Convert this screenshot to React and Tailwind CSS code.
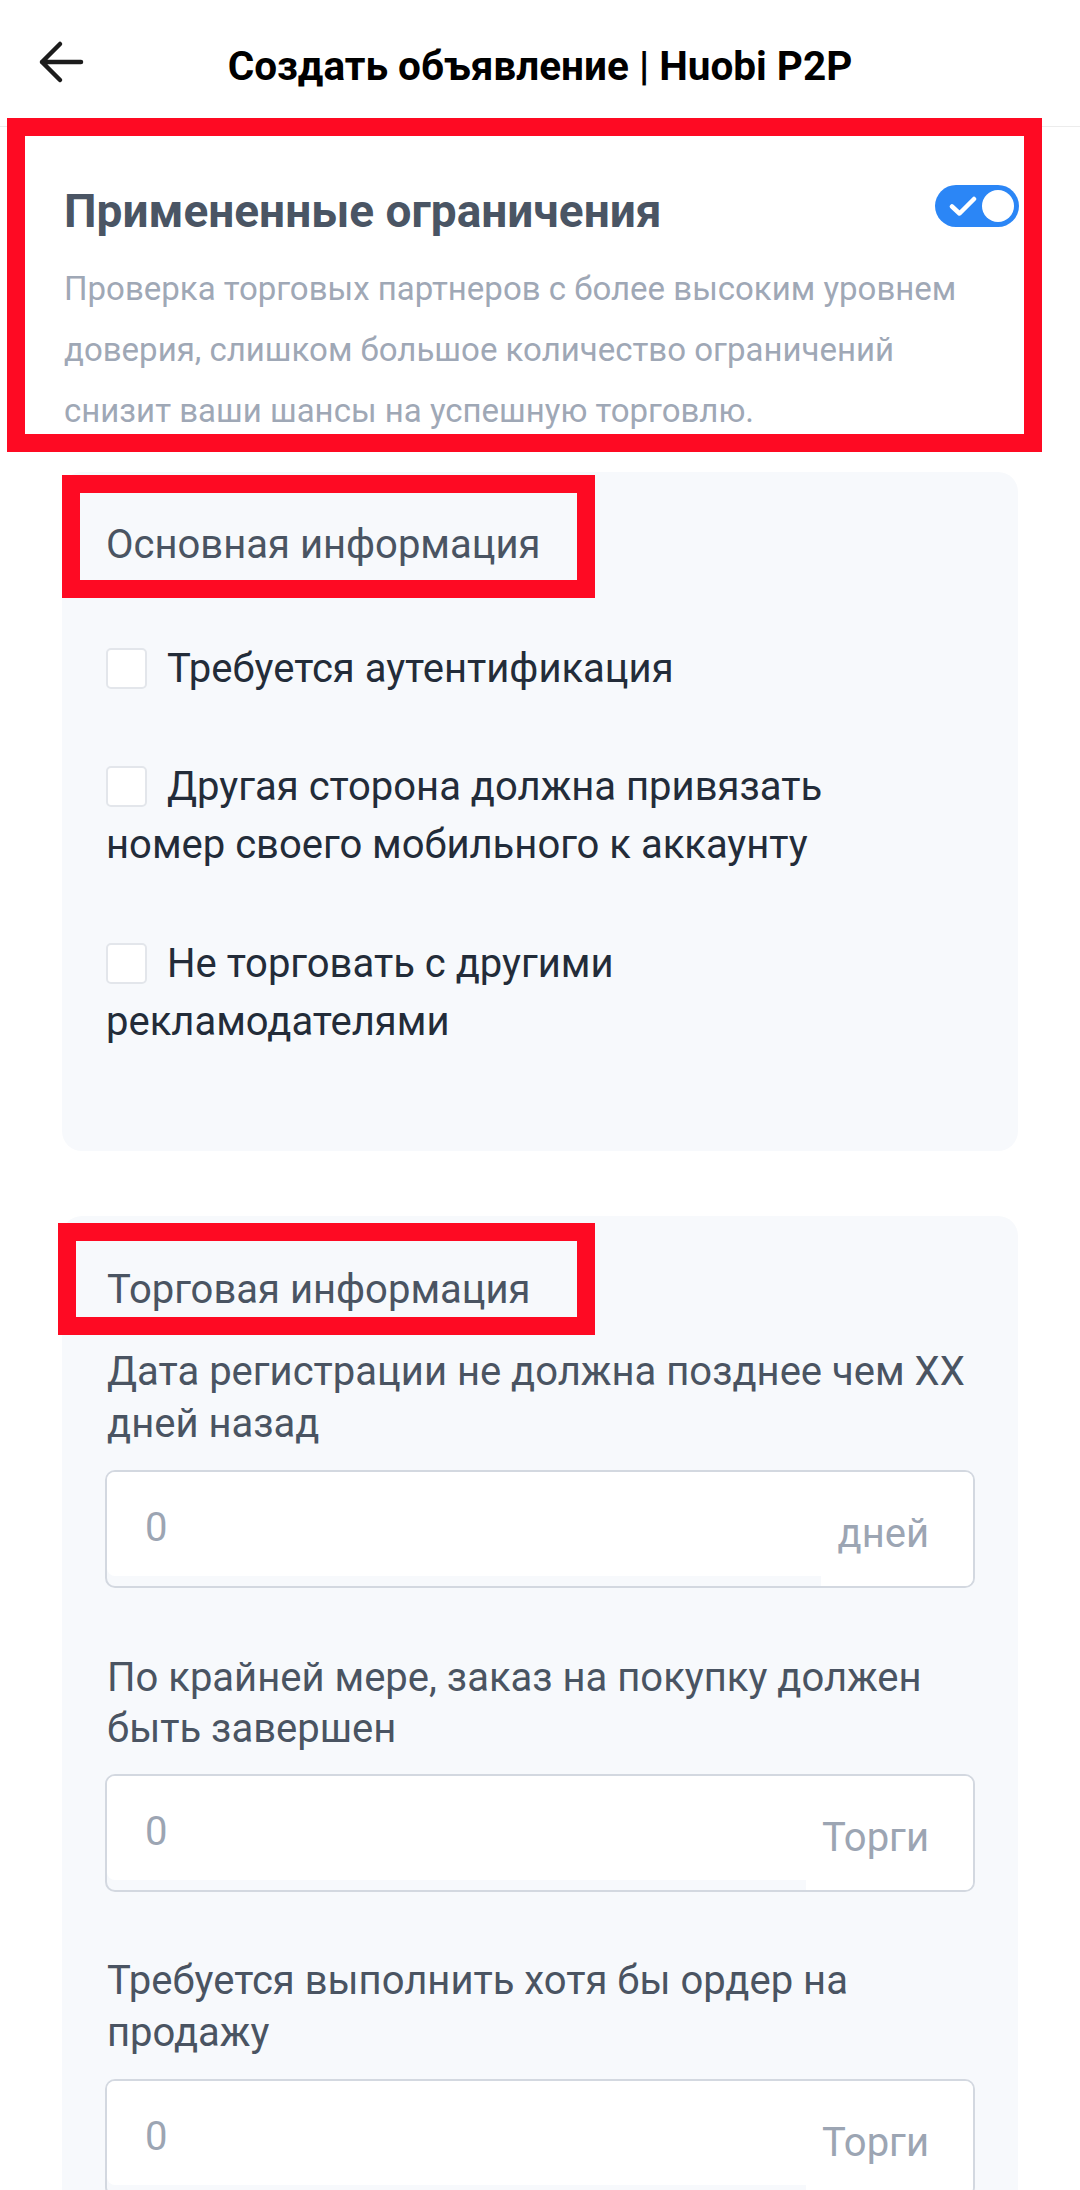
import React from "react";

function Checkbox() {
  return (
    <span className="inline-block w-[41px] h-[41px] align-middle mr-[20px] -mt-[6px] rounded-[5px] border-2 border-[#e3e6eb] bg-white" />
  );
}

function NumberField({ unit }) {
  return (
    <div className="mt-[20px] h-[118px] flex border-2 border-[#d3d8e0] rounded-[10px] bg-[#f7f9fc] overflow-hidden">
      <div className="flex-1 mb-[10px] bg-white rounded-bl-[8px] flex items-center pl-[38px] text-[40px] text-[#9ca5b3] leading-none pt-[8px]">
        0
      </div>
      <div className="bg-white flex items-center pl-[16px] pr-[44px] pt-[9px] text-[40px] text-[#9ca5b3] leading-none">
        {unit}
      </div>
    </div>
  );
}

export default function App() {
  return (
    <div className="relative w-[1080px] h-[2190px] overflow-hidden bg-white font-['Roboto',sans-serif]">
      {/* Header */}
      <div className="h-[127px] border-b border-[#ececec] grid grid-cols-[1fr_auto_1fr] items-center">
        <div className="pl-[38px] pb-[2px]">
          <svg width="46" height="44" viewBox="0 0 46 44" fill="none">
            <path d="M43 22H4M22 4L4 22L22 40" stroke="#1c1c1c" strokeWidth="4.5" strokeLinecap="round" strokeLinejoin="round" />
          </svg>
        </div>
        <div className="text-[40.5px] font-bold text-black pt-[6px]">
          Создать объявление | Huobi P2P
        </div>
        <div />
      </div>

      {/* Restrictions */}
      <div className="pl-[64px] pr-[61px] pt-[55px]">
        <div className="flex items-center justify-between">
          <div className="text-[46px] leading-[58px] font-bold text-[#4a5564]">Примененные ограничения</div>
          <div className="w-[84px] h-[42px] rounded-full bg-[#2b86f6] flex items-center justify-between pl-[14px] pr-[5px] -mt-[10px]">
            <svg width="28" height="22" viewBox="0 0 28 22" fill="none">
              <path d="M3 11.5L10.5 18.5L25 4" stroke="white" strokeWidth="4.5" strokeLinecap="round" strokeLinejoin="round" />
            </svg>
            <span className="w-[32px] h-[32px] rounded-full bg-white" />
          </div>
        </div>
        <p className="mt-[18px] text-[33px] leading-[61px] text-[#9fa8b6]">
          Проверка торговых партнеров с более высоким уровнем
          <br />
          доверия, слишком большое количество ограничений
          <br />
          снизит ваши шансы на успешную торговлю.
        </p>
      </div>

      {/* Basic info card */}
      <div className="mx-[62px] mt-[31px] rounded-[20px] bg-[#f7f9fc] px-[44px] pt-[44px] pb-[100px]">
        <div className="text-[40px] leading-[58px] text-[#4a5462]">Основная информация</div>
        <div className="mt-[66px] text-[40px] leading-[58px] text-[#232c39]">
          <Checkbox />Требуется аутентификация
        </div>
        <div className="mt-[60px] text-[40px] leading-[58px] text-[#232c39]">
          <Checkbox />Другая сторона должна привязать
          <br />
          номер своего мобильного к аккаунту
        </div>
        <div className="mt-[61px] text-[40px] leading-[58px] text-[#232c39]">
          <Checkbox />Не торговать с другими
          <br />
          рекламодателями
        </div>
      </div>

      {/* Trade info card */}
      <div className="mx-[62px] mt-[65px] rounded-[20px] bg-[#f7f9fc] px-[43px] pt-[45px] pb-[60px]">
        <div className="pl-[2px] text-[40px] leading-[58px] text-[#4a5462]">Торговая информация</div>
        <div className="mt-[27px] pl-[2px] text-[40px] leading-[52px] text-[#4a5462]">
          Дата регистрации не должна позднее чем XX
          <br />
          дней назад
        </div>
        <NumberField unit="дней" />
        <div className="mt-[64px] pl-[2px] text-[40px] leading-[51px] text-[#4a5462]">
          По крайней мере, заказ на покупку должен
          <br />
          быть завершен
        </div>
        <NumberField unit="Торги" />
        <div className="mt-[63px] pl-[2px] text-[40px] leading-[52px] text-[#4a5462]">
          Требуется выполнить хотя бы ордер на
          <br />
          продажу
        </div>
        <NumberField unit="Торги" />
      </div>

      {/* Red annotation boxes */}
      <div className="absolute left-[7px] top-[118px] w-[1035px] h-[334px] border-[18px] border-[#fe0a23]" />
      <div className="absolute left-[62px] top-[475px] w-[533px] h-[123px] border-[18px] border-[#fe0a23]" />
      <div className="absolute left-[58px] top-[1223px] w-[537px] h-[112px] border-[18px] border-[#fe0a23]" />
    </div>
  );
}
